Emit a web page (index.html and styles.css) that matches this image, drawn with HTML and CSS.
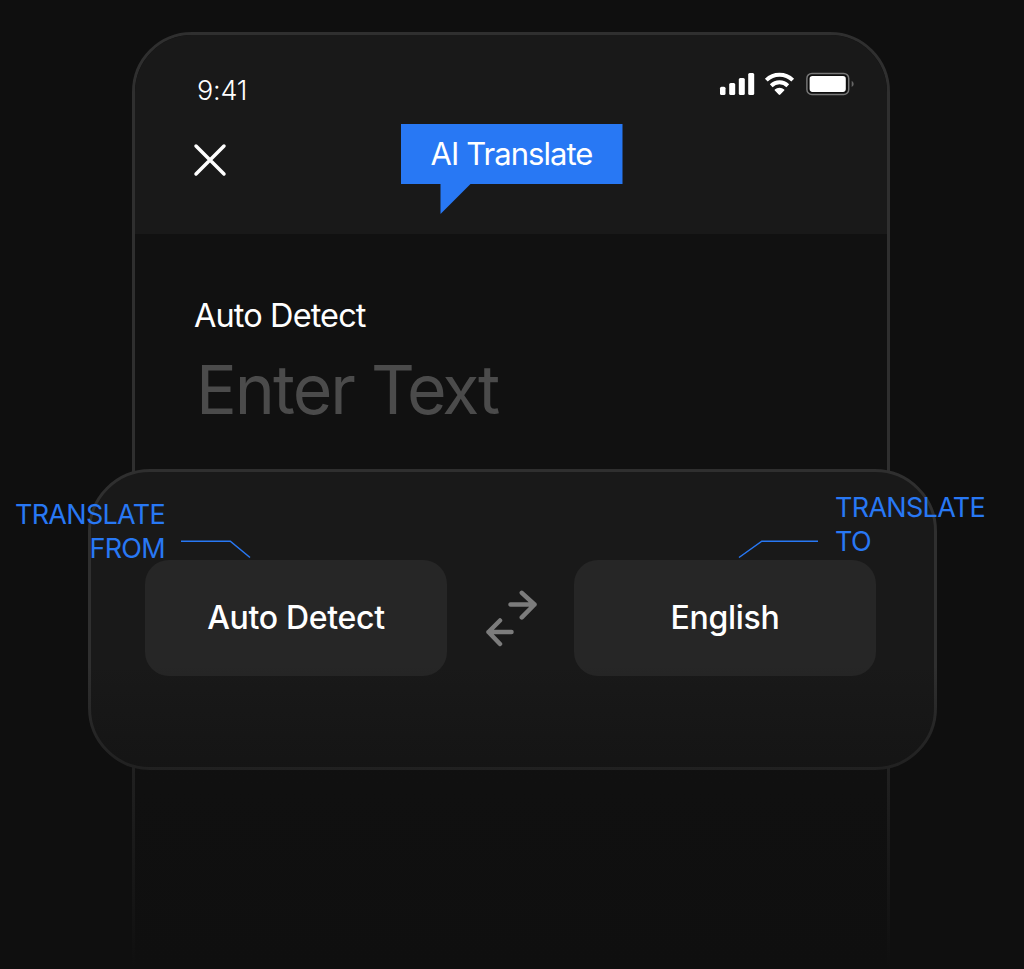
FILE: index.html
```html
<!DOCTYPE html>
<html lang="en">
<head>
<meta charset="utf-8">
<title>AI Translate</title>
<link rel="stylesheet" href="styles.css">
</head>
<body>
<main class="stage">
  <section class="phone">
    <header class="header">
      <div class="status">
        <span class="time">9:41</span>
        <svg class="status-icons" width="136" height="26" viewBox="0 0 136 26" fill="#fff">
          <rect x="1" y="15.800" width="5.500" height="8.200" rx="1.500"/>
          <rect x="10.200" y="12" width="6" height="12" rx="1.500"/>
          <rect x="19.800" y="7" width="6" height="17" rx="1.500"/>
          <rect x="29.200" y="2" width="6" height="22" rx="1.500"/>
          <g fill="none" stroke="#fff" stroke-width="4">
            <path d="M47.300 9.100a19 19 0 0 1 26.400 0"/>
            <path d="M52.200 14.700a12 12 0 0 1 16.600 0"/>
          </g>
          <path d="M55.800 18.600a6.800 6.800 0 0 1 9.400 0q.5.500 0 1l-3.900 3.900q-.8.800-1.600 0l-3.900-3.900q-.5-.5 0-1z"/>
          <rect x="87.900" y="2.400" width="41.800" height="21" rx="5" fill="#0e0e0e" stroke="#777" stroke-width="1.500"/>
          <rect x="90.600" y="4.900" width="36.200" height="16" rx="2.800"/>
          <path d="M132.700 9.700q2 1.200 2 3.200t-2 3.200z" fill="#666"/>
        </svg>
      </div>
      <svg class="close" width="36" height="36" viewBox="0 0 36 36" fill="none" stroke="#fff" stroke-width="3.500" stroke-linecap="round"><path d="M4 4l28 28M32 4L4 32"/></svg>
      <div class="callout"><h1 class="title">AI Translate</h1></div>
    </header>
    <div class="input-area">
      <p class="source">Auto Detect</p>
      <p class="placeholder">Enter <span class="tight">Text</span></p>
    </div>
  </section>
  <section class="panel">
    <div class="language">Auto Detect</div>
    <svg class="swap" width="56" height="60" viewBox="0 0 56 60" fill="none" stroke="#7c7c7c" stroke-width="4.500" stroke-linecap="round" stroke-linejoin="round">
      <path d="M27.500 16.500h24M38.800 4.800L51.500 16.500 38.800 29.400M28.500 44h-23M17 32.500L5.500 44 17 56"/>
    </svg>
    <div class="language">English</div>
  </section>
  <div class="fade"></div>
  <p class="label label-from">TRANSLATE<br>FROM</p>
  <svg class="line line-from" width="72" height="20" viewBox="0 0 72 20"><path d="M0 2.200h49.300L69 18.500"/></svg>
  <p class="label label-to">TRANSLATE<br>TO</p>
  <svg class="line line-to" width="82" height="20" viewBox="0 0 82 20"><path d="M80 2.200H23.800L1 18.500"/></svg>
</main>
</body>
</html>
```
FILE: styles.css
```css
* { box-sizing: border-box; }

body {
  margin: 0;
  background: #0f0f0f;
  color: #fff;
  font-family: Inter, "Liberation Sans", sans-serif;
}

p, h1 { margin: 0; }
svg { display: block; flex: none; }

.stage {
  position: relative;
  height: 969px;
  padding: 32px 134px 0 132px;
  overflow: hidden;
}

.phone {
  height: 1060px;
  border: 3px solid #2f2f2f;
  border-radius: 60px;
  background: #111;
  overflow: hidden;
}

.header {
  position: relative;
  height: 199px;
  padding: 36px 32px 0 57px;
  background: #191919;
}

.status {
  display: flex;
  justify-content: space-between;
  height: 71px;
}

.time {
  padding: 4px 0 0 5px;
  font-size: 27px;
  line-height: 31px;
  font-weight: 300;
  letter-spacing: -0.2px;
}

.callout {
  position: absolute;
  left: 265.500px;
  top: 89px;
  width: 222px;
  height: 90px;
  background: #2878f4;
  clip-path: polygon(0 0, 100% 0, 100% 60px, 70px 60px, 40px 90px, 40px 60px, 0 60px);
  text-align: center;
}

.title {
  font-size: 31px;
  line-height: 60px;
  font-weight: 400;
  letter-spacing: -0.95px;
}

.input-area { padding: 62px 59px; }

.source {
  font-size: 32.500px;
  line-height: 40px;
  letter-spacing: -0.9px;
}

.placeholder {
  margin: 11px 0 0 2px;
  font-size: 68px;
  line-height: 84px;
  letter-spacing: -2px;
  color: #4b4b4b;
}

.tight { letter-spacing: -2.7px; }

.panel {
  position: absolute;
  left: 88px;
  top: 469px;
  width: 849px;
  height: 301px;
  padding: 88px 58px 0 54px;
  display: flex;
  justify-content: space-between;
  border: 3px solid #2f2f2f;
  border-radius: 62px;
  background: #191919;
}

.language {
  width: 302px;
  height: 116px;
  border-radius: 24px;
  background: #262626;
  font-size: 32px;
  line-height: 115px;
  font-weight: 500;
  letter-spacing: -0.3px;
  text-align: center;
}

.swap { margin-top: 28px; }

.fade {
  position: absolute;
  inset: 665px 0 0;
  background: linear-gradient(transparent, rgb(15 15 15 / 0.45) 105px, #0f0f0f);
}

.label {
  position: absolute;
  color: #2878f4;
  font-size: 27px;
  line-height: 34px;
  letter-spacing: -0.7px;
}

.label-from { right: 859px; top: 498px; text-align: right; }
.label-to { left: 835px; top: 490.500px; }

.line {
  position: absolute;
  top: 539px;
  fill: none;
  stroke: #2878f4;
  stroke-width: 1.500;
}

.line-from { left: 181px; }
.line-to { left: 738px; }
```
